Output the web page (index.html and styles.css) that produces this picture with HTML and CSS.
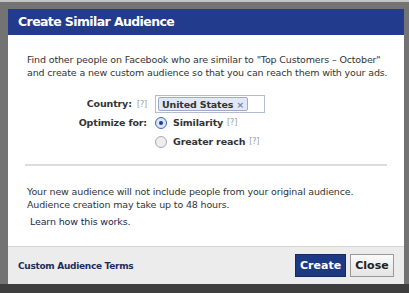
FILE: index.html
```html
<!DOCTYPE html>
<html lang="en">
<head>
	<meta charset="UTF-8">
	<title>Create Similar Audience</title>
	<link rel="stylesheet" href="styles.css">
</head>
<body>
	<div class="screen">
		<div class="dialog">
			<div class="title">Create Similar Audience</div>
			<div class="content">
				<p class="intro">Find other people on Facebook who are similar to "Top Customers – October" and create a new custom audience so that you can reach them with your ads.</p>
				<div class="form">
					<div class="label">Country: <span class="help">[?]</span></div>
					<div class="field">
						<div class="tokens">
							<span class="token">United States <span class="x">×</span></span>
						</div>
					</div>
					<div class="label">Optimize for:</div>
					<div class="field">
						<label class="radio"><span class="dot checked"></span>Similarity <span class="help">[?]</span></label>
					</div>
					<div class="label"></div>
					<div class="field">
						<label class="radio"><span class="dot"></span>Greater reach <span class="help">[?]</span></label>
					</div>
				</div>
				<div class="sep"></div>
				<p class="note">Your new audience will not include people from your original audience. Audience creation may take up to 48 hours.</p>
				<a class="learn" href="#">Learn how this works.</a>
			</div>
			<div class="footer">
				<a class="terms" href="#">Custom Audience Terms</a>
				<div class="buttons">
					<button class="btn create">Create</button>
					<button class="btn close">Close</button>
				</div>
			</div>
		</div>
	</div>
</body>
</html>
```
FILE: styles.css
```css
*{
	margin: 0;
	padding: 0;
	box-sizing: border-box;
}
body{
	width: 409px;
	height: 293px;
	overflow: hidden;
	background: #3e3e3e;
	font-family: "DejaVu Sans", "Liberation Sans", sans-serif;
	color: #333;
}
.screen{
	height: 284px;
	background: #737373;
	border-top: 2px solid #c4c4c4;
	padding: 7px 5px 0 8px;
}
.dialog{
	width: 396px;
	height: 275px;
	background: #fff;
	display: flex;
	flex-direction: column;
}
.title{
	height: 26px;
	background: #233b8c;
	color: #fff;
	font-weight: bold;
	font-size: 12.5px;
	letter-spacing: -0.6px;
	line-height: 26px;
	padding-left: 10px;
}
.content{
	flex: 1;
	padding: 19px 12px 0 19px;
	font-size: 9.5px;
	letter-spacing: -0.15px;
	line-height: 12.5px;
}
.form{
	display: grid;
	grid-template-columns: 120px 1fr;
	column-gap: 8px;
	row-gap: 1px;
	margin-top: 16px;
	font-weight: bold;
}
.label{
	text-align: right;
	height: 18px;
	line-height: 18px;
}
.help{
	color: #999;
	font-weight: normal;
	font-size: 8px;
	margin-left: 2px;
}
.tokens{
	width: 110px;
	height: 18px;
	border: 1px solid #b4bdd0;
	padding: 1px 2px;
}
.token{
	display: inline-block;
	height: 14px;
	line-height: 13px;
	padding: 0 3px;
	background: #e2e8f4;
	border: 1px solid #9daccc;
	border-radius: 2px;
}
.token .x{
	color: #6d84b4;
	font-size: 9px;
}
.radio{
	display: flex;
	align-items: center;
	height: 18px;
}
.dot{
	width: 12px;
	height: 12px;
	border-radius: 50%;
	border: 1px solid #aaa;
	background: #eee;
	margin-right: 6px;
	position: relative;
}
.dot.checked{
	border-color: #3e6bb8;
	background: #d8e6f8;
}
.dot.checked::after{
	content: "";
	position: absolute;
	left: 3px;
	top: 3px;
	width: 4px;
	height: 4px;
	border-radius: 50%;
	background: #1c3f86;
}
.radio .help{
	margin-left: 4px;
}
.sep{
	height: 2px;
	background: #dcdcdc;
	margin: 13px 5px 19px -2px;
}
.note{
	line-height: 13px;
}
.learn{
	display: block;
	margin-top: 5px;
	margin-left: 3px;
	color: #1a2755;
	text-decoration: none;
}
.footer{
	height: 38px;
	background: #ececec;
	border-top: 1px solid #d6d6d6;
	display: flex;
	align-items: center;
	justify-content: space-between;
	padding: 0 10px 0 10px;
}
.terms{
	color: #1d2c5c;
	font-size: 9px;
	letter-spacing: -0.3px;
	font-weight: bold;
	text-decoration: none;
}
.buttons{
	display: flex;
	gap: 4px;
}
.btn{
	height: 23px;
	font-family: "DejaVu Sans", "Liberation Sans", sans-serif;
	font-weight: bold;
	font-size: 11px;
	padding: 0 4px;
	border: 1px solid #999;
}
.btn.create{
	width: 51px;
	background: #1e3984;
	border-color: #122a66;
	color: #fff;
}
.btn.close{
	width: 44px;
	background: linear-gradient(#fafafa, #e4e4e4);
	color: #222;
}
```
